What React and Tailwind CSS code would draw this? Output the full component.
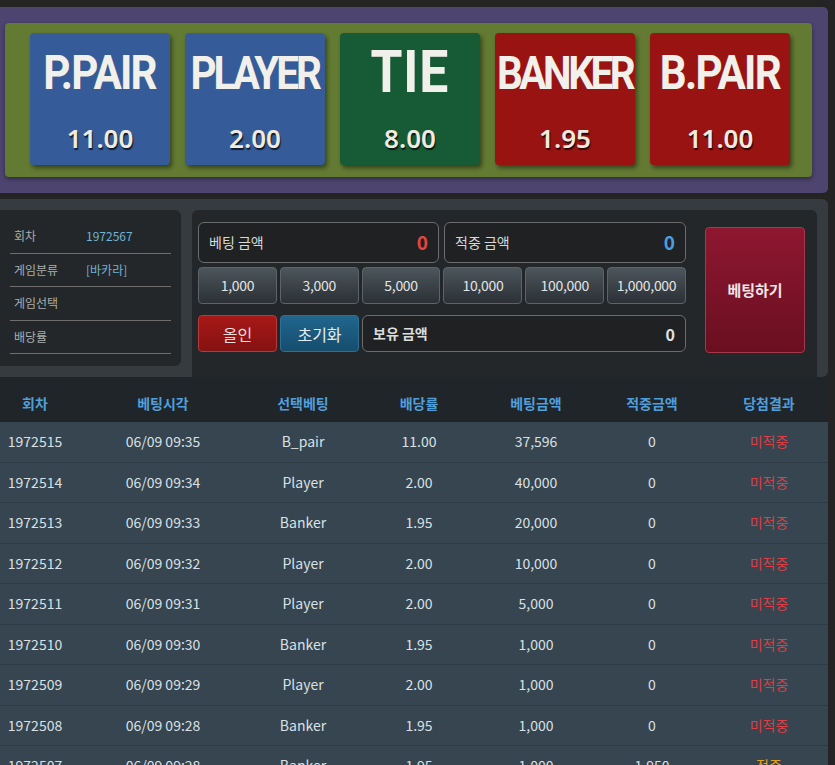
import React from "react";

const picks = [
  { name: "P.PAIR", rate: "11.00", bg: "bg-[#355c99]", size: "text-[49px] tracking-[-2px]" },
  { name: "PLAYER", rate: "2.00", bg: "bg-[#355c99]", size: "text-[47px] tracking-[-3.5px]" },
  { name: "TIE", rate: "8.00", bg: "bg-[#175b36]", size: "text-[60px] tracking-[1px]" },
  { name: "BANKER", rate: "1.95", bg: "bg-[#9a1313]", size: "text-[47px] tracking-[-4px]" },
  { name: "B.PAIR", rate: "11.00", bg: "bg-[#9a1313]", size: "text-[49px] tracking-[-2px]" },
];

const chips = ["1,000", "3,000", "5,000", "10,000", "100,000", "1,000,000"];

const info = [
  ["회차", "1972567"],
  ["게임분류", "[바카라]"],
  ["게임선택", ""],
  ["배당률", ""],
];

const history = [
  ["1972515", "06/09 09:35", "B_pair", "11.00", "37,596", "0", "미적중"],
  ["1972514", "06/09 09:34", "Player", "2.00", "40,000", "0", "미적중"],
  ["1972513", "06/09 09:33", "Banker", "1.95", "20,000", "0", "미적중"],
  ["1972512", "06/09 09:32", "Player", "2.00", "10,000", "0", "미적중"],
  ["1972511", "06/09 09:31", "Player", "2.00", "5,000", "0", "미적중"],
  ["1972510", "06/09 09:30", "Banker", "1.95", "1,000", "0", "미적중"],
  ["1972509", "06/09 09:29", "Player", "2.00", "1,000", "0", "미적중"],
  ["1972508", "06/09 09:28", "Banker", "1.95", "1,000", "0", "미적중"],
  ["1972507", "06/09 09:28", "Banker", "1.95", "1,000", "1,950", "적중"],
];

const cols = "grid grid-cols-[70px_186px_94px_138px_96px_136px_98px]";

function PickCard({ p }) {
  return (
    <div className={`${p.bg} w-[140px] h-[132px] rounded-[4px] shadow-[2px_3px_4px_rgba(0,0,0,0.45)] flex flex-col items-center text-[#f2f0ea]`}>
      <div className={`h-[78px] flex items-center justify-center font-['Roboto'] font-bold leading-none scale-x-[0.86] ${p.size}`}>
        {p.name}
      </div>
      <div className="mt-[14px] font-['Noto_Sans'] font-semibold text-[26px] leading-none text-[#efebe0] [text-shadow:1px_2px_1px_rgba(0,0,0,0.7)]">
        {p.rate}
      </div>
    </div>
  );
}

function AmountBox({ label, value, color, className = "" }) {
  return (
    <div className={`h-[41px] flex items-center justify-between px-[10px] bg-[#1f2122] border border-[#6c6c6c] rounded-[6px] ${className}`}>
      <span className="text-[14px] text-[#d8d8d8]">{label}</span>
      <span className={`text-[19px] font-bold ${color}`}>{value}</span>
    </div>
  );
}

export default function App() {
  return (
    <div className="w-[835px] h-[765px] overflow-hidden bg-[#242424] pt-[7px] font-['Noto_Sans_CJK_KR',sans-serif]">
      {/* 배팅 선택 */}
      <div className="w-[828px] h-[186px] bg-[#4d4470] rounded-r-[5px] pt-[16px] pl-[5px]">
        <div className="w-[807px] h-[154px] bg-[#627a32] rounded-[4px] shadow-[0_2px_4px_rgba(0,0,0,0.4)] flex gap-[15px] pl-[25px] pt-[10px]">
          {picks.map((p) => (
            <PickCard key={p.name} p={p} />
          ))}
        </div>
      </div>

      {/* 베팅 패널 */}
      <div className="mt-[6px] w-[828px] h-[178px] bg-[#353b3e] rounded-r-[6px] pt-[11px] flex">
        <div className="w-[181px] h-[156px] bg-[#232729] rounded-r-[6px] pt-[10px] px-[10px]">
          {info.map(([k, v]) => (
            <div key={k} className="h-[33.5px] flex items-center border-b border-[#6e6e6e] text-[12px]">
              <span className="w-[76px] pl-[4px] text-[#a9adaf]">{k}</span>
              <span className="text-[#6fb3d8]">{v}</span>
            </div>
          ))}
        </div>

        <div className="ml-[11px] w-[625px] h-[167px] bg-[#232729] rounded-t-[6px] pt-[12px] pl-[6px] flex">
          <div className="w-[488px] flex flex-col">
            <div className="flex gap-[5px]">
              <AmountBox className="w-[241px]" label="베팅 금액" value="0" color="text-[#e3463f]" />
              <AmountBox className="w-[242px]" label="적중 금액" value="0" color="text-[#4a9fe0]" />
            </div>
            <div className="mt-[4px] flex gap-[3px]">
              {chips.map((c) => (
                <div key={c} className="w-[79px] h-[37px] flex items-center justify-center rounded-[4px] border border-[#5b6469] bg-gradient-to-b from-[#4c565c] to-[#2b3136] text-[14px] text-[#e2e4e5] tracking-[-0.3px]">
                  {c}
                </div>
              ))}
            </div>
            <div className="mt-[11px] flex gap-[3px]">
              <div className="w-[79px] h-[37px] flex items-center justify-center rounded-[4px] border border-[#b53a3a] bg-gradient-to-b from-[#a81818] to-[#851212] text-[16px] text-[#f1dede]">
                올인
              </div>
              <div className="w-[79px] h-[37px] flex items-center justify-center rounded-[4px] border border-[#2f6f94] bg-gradient-to-b from-[#21668f] to-[#154d6d] text-[16px] text-[#e3edf3]">
                초기화
              </div>
              <div className="w-[324px] h-[37px] flex items-center justify-between px-[10px] bg-[#1f2122] border border-[#6c6c6c] rounded-[6px]">
                <span className="text-[14px] font-bold text-[#dcdcdc]">보유 금액</span>
                <span className="text-[16px] font-bold text-[#e2e2e2]">0</span>
              </div>
            </div>
          </div>
          <div className="ml-[19px] mt-[5px] w-[100px] h-[126px] flex items-center justify-center rounded-[4px] border border-[#a3394a] bg-gradient-to-b from-[#8e1730] to-[#6a0f20] text-[15px] font-bold text-[#f2e4e6]">
            베팅하기
          </div>
        </div>
      </div>

      {/* 베팅 내역 */}
      <div className="w-[828px]">
        <div className={`${cols} h-[45px] pt-[7px] items-center bg-[#1f2528] text-[14px] font-bold text-[#4f9fdc]`}>
          {["회차", "베팅시각", "선택베팅", "배당률", "베팅금액", "적중금액", "당첨결과"].map((h) => (
            <div key={h} className="text-center">{h}</div>
          ))}
        </div>
        {history.map((r) => (
          <div key={r[0]} className={`${cols} h-[40.5px] items-center bg-[#36454f] border-b border-[#2e3b44] text-[14px] text-[#d9e1e6]`}>
            {r.slice(0, 6).map((c, i) => (
              <div key={i} className="text-center">{c}</div>
            ))}
            <div className={`text-center ${r[6] === "적중" ? "text-[#e3a21d]" : "text-[#dc3f46]"}`}>{r[6]}</div>
          </div>
        ))}
      </div>
    </div>
  );
}
